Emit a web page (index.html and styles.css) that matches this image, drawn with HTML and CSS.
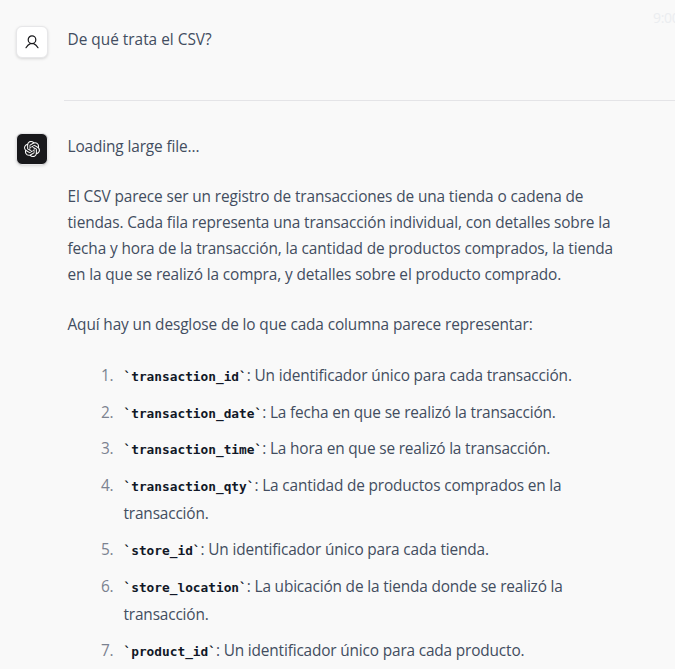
FILE: index.html
```html
<!DOCTYPE html>
<html lang="es">
<head>
<meta charset="utf-8">
<title>Chat</title>
<link rel="stylesheet" href="styles.css">
</head>
<body>
<main class="chat">
  <time class="stamp">9:00</time>
  <section class="message question">
    <div class="avatar user">
      <svg width="16" height="16" viewBox="0 0 16 16" fill="none" stroke="currentColor" stroke-width="1.2" stroke-linecap="round"><circle cx="8" cy="5.7" r="3.8"/><path d="M2 13.7C3.2 11.7 5 10.2 6.3 9.6h3.4C11 10.2 12.8 11.7 14 13.7"/></svg>
    </div>
    <div class="content"><p>De qué trata el CSV?</p></div>
  </section>
  <hr class="divider">
  <section class="message">
    <div class="avatar bot">
      <svg width="16" height="16" viewBox="0 0 24 24" fill="currentColor"><path d="M22.2819 9.8211a5.9847 5.9847 0 0 0-.5157-4.9108 6.0462 6.0462 0 0 0-6.5098-2.9A6.0651 6.0651 0 0 0 4.9807 4.1818a5.9847 5.9847 0 0 0-3.9977 2.9 6.0462 6.0462 0 0 0 .7427 7.0966 5.98 5.98 0 0 0 .511 4.9107 6.051 6.051 0 0 0 6.5146 2.9001A5.9847 5.9847 0 0 0 13.2599 24a6.0557 6.0557 0 0 0 5.7718-4.2058 5.9894 5.9894 0 0 0 3.9977-2.9001 6.0557 6.0557 0 0 0-.7475-7.073zm-9.022 12.6081a4.4755 4.4755 0 0 1-2.8764-1.0408l.1419-.0804 4.7783-2.7582a.7948.7948 0 0 0 .3927-.6813v-6.7369l2.02 1.1686a.071.071 0 0 1 .038.052v5.5826a4.504 4.504 0 0 1-4.4945 4.4944zm-9.6607-4.1254a4.4708 4.4708 0 0 1-.5346-3.0137l.142.0852 4.783 2.7582a.7712.7712 0 0 0 .7806 0l5.8428-3.3685v2.3324a.0804.0804 0 0 1-.0332.0615L9.74 19.9502a4.4992 4.4992 0 0 1-6.1408-1.6464zM2.3408 7.8956a4.485 4.485 0 0 1 2.3655-1.9728V11.6a.7664.7664 0 0 0 .3879.6765l5.8144 3.3543-2.0201 1.1685a.0757.0757 0 0 1-.071 0l-4.8303-2.7865A4.504 4.504 0 0 1 2.3408 7.872zm16.5963 3.8558L13.1038 8.364 15.1192 7.2a.0757.0757 0 0 1 .071 0l4.8303 2.7913a4.4944 4.4944 0 0 1-.6765 8.1042v-5.6772a.79.79 0 0 0-.407-.667zm2.0107-3.0231l-.142-.0852-4.7735-2.7818a.7759.7759 0 0 0-.7854 0L9.409 9.2297V6.8974a.0662.0662 0 0 1 .0284-.0615l4.8303-2.7866a4.4992 4.4992 0 0 1 6.6802 4.66zM8.3065 12.863l-2.02-1.1638a.0804.0804 0 0 1-.038-.0567V6.0742a4.4992 4.4992 0 0 1 7.3757-3.4537l-.142.0805L8.704 5.459a.7948.7948 0 0 0-.3927.6813zm1.0976-2.3654l2.602-1.4998 2.6069 1.4998v2.9994l-2.5974 1.4997-2.6067-1.4997Z"/></svg>
    </div>
    <div class="content">
      <p>Loading large file...</p>
      <p>El CSV parece ser un registro de transacciones de una tienda o cadena de<br>tiendas. Cada fila representa una transacción individual, con detalles sobre la<br>fecha y hora de la transacción, la cantidad de productos comprados, la tienda<br>en la que se realizó la compra, y detalles sobre el producto comprado.</p>
      <p>Aquí hay un desglose de lo que cada columna parece representar:</p>
      <ol class="columns">
        <li><code>`transaction_id`</code>: Un identificador único para cada transacción.</li>
        <li><code>`transaction_date`</code>: La fecha en que se realizó la transacción.</li>
        <li><code>`transaction_time`</code>: La hora en que se realizó la transacción.</li>
        <li><code>`transaction_qty`</code>: La cantidad de productos comprados en la<br>transacción.</li>
        <li><code>`store_id`</code>: Un identificador único para cada tienda.</li>
        <li><code>`store_location`</code>: La ubicación de la tienda donde se realizó la<br>transacción.</li>
        <li><code>`product_id`</code>: Un identificador único para cada producto.</li>
      </ol>
    </div>
  </section>
</main>
</body>
</html>
```

FILE: styles.css
```css
*, *::before { box-sizing: border-box; }

body {
  margin: 0;
  height: 669px;
  overflow: hidden;
  background: #f9f9f9;
  color: #424d60;
  font: 15.4px/26px "Open Sans", "Noto Sans", sans-serif;
  letter-spacing: -0.12px;
}

.chat { position: relative; padding-top: 26px; }

.stamp {
  position: absolute;
  top: 5px;
  left: 653px;
  font-size: 14px;
  letter-spacing: -0.3px;
  color: #ebedf0;
}

.message {
  display: flex;
  gap: 19.5px;
  padding-left: 16px;
}

.question {
  height: 74px;
  letter-spacing: 0;
}

.avatar {
  flex: none;
  display: flex;
  align-items: center;
  justify-content: center;
  width: 32px;
  height: 32px;
  border: 1px solid #e7e7e9;
  border-radius: 6px;
  box-shadow: 0 1px 3px rgba(0, 0, 0, 0.14);
}

.user { background: #fff; color: #18181b; }
.bot { background: #18181b; color: #fafafa; }

.content {
  padding-top: 1px;
  white-space: nowrap;
}

p { margin: 0 0 24px; }

.divider {
  margin: 0 0 32px 64px;
  border: 0;
  border-top: 1px solid #e4e4e7;
}

.columns {
  margin: 0;
  padding: 0 0 0 56px;
  line-height: 28px;
  letter-spacing: -0.16px;
  list-style: none;
  counter-reset: column;
}

.columns li {
  margin-bottom: 8.5px;
  counter-increment: column;
}

.columns li::before {
  content: counter(column) ".";
  display: inline-block;
  width: 40px;
  margin-left: -40px;
  padding-right: 10px;
  text-align: right;
  color: #7b8290;
}

code {
  color: #111827;
  font: bold 12.8px/20px "DejaVu Sans Mono", monospace;
  letter-spacing: 0;
}
```
